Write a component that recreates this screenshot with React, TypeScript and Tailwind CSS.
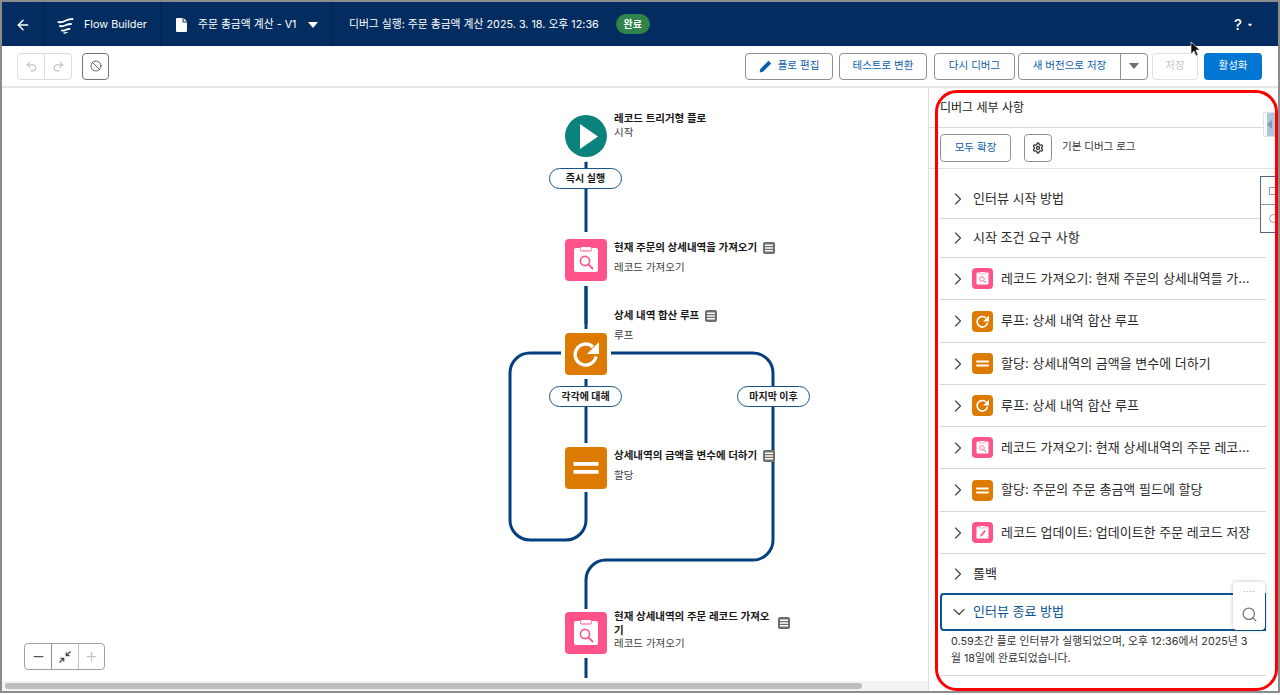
import React from "react";
import { ArrowLeft, Undo2, Redo2, Ban, ChevronRight, ChevronDown, Search, Minus, Plus, Settings } from "lucide-react";

const font = { fontFamily: 'Inter, "Noto Sans CJK KR", sans-serif' };

function Logo() {
  return (
    <svg width="17" height="17" viewBox="0 0 17 17" fill="none" stroke="#fff" strokeWidth="1.9" strokeLinecap="round">
      <path d="M1.500 5 C4 6 6 5 9 3.500 C11 2.500 13 2 15.500 2" />
      <path d="M3 9 C5 9.800 7 9 9 8 C10.500 7.300 12 7 14 7" />
      <path d="M5 13.500 C7 14 8 13.500 9.500 12.500 C10.500 12 11.500 12 12.500 12" />
      <path d="M7 16 C8 16 9 15.800 10 15.500" strokeWidth="1.300" />
    </svg>
  );
}

function Doc() {
  return (
    <svg width="11" height="14" viewBox="0 0 11 14" fill="#fff">
      <path d="M1 0h5.500v3.500a1 1 0 0 0 1 1H11V13a1 1 0 0 1-1 1H1a1 1 0 0 1-1-1V1a1 1 0 0 1 1-1z" />
      <path d="M7.500 0 11 3.500H7.500z" />
    </svg>
  );
}

function Caret({ className = "" }: { className?: string }) {
  return (
    <svg width="10" height="6" viewBox="0 0 10 6" fill="currentColor" className={className}>
      <path d="M0 0h10L5 6z" />
    </svg>
  );
}

function GetIcon({ size, r = 4 }: { size: number; r?: number }) {
  return (
    <svg width={size} height={size} viewBox="0 0 42 42">
      <rect width="42" height="42" rx={r} fill="#ff538a" />
      <path d="M11 9h4v1.500a2 2 0 0 0 2 2h8a2 2 0 0 0 2-2V9h4a2 2 0 0 1 2 2v20a2 2 0 0 1-2 2H11a2 2 0 0 1-2-2V11a2 2 0 0 1 2-2z" fill="#fff" />
      <rect x="15.500" y="8" width="11" height="3.500" rx="1.500" fill="#fff" />
      <circle cx="20" cy="22" r="4.600" fill="none" stroke="#ff538a" strokeWidth="1.600" />
      <path d="M23.400 25.400 27.500 29.500" stroke="#ff538a" strokeWidth="1.800" strokeLinecap="round" />
    </svg>
  );
}

function UpdateIcon({ size, r = 8 }: { size: number; r?: number }) {
  return (
    <svg width={size} height={size} viewBox="0 0 42 42">
      <rect width="42" height="42" rx={r} fill="#ff538a" />
      <path d="M11 9h4v1.500a2 2 0 0 0 2 2h8a2 2 0 0 0 2-2V9h4a2 2 0 0 1 2 2v20a2 2 0 0 1-2 2H11a2 2 0 0 1-2-2V11a2 2 0 0 1 2-2z" fill="#fff" />
      <rect x="15.500" y="8" width="11" height="3.500" rx="1.500" fill="#fff" />
      <path d="M25 16 17.500 25l-1.500 4.500 4-1.800 7.500-9z" fill="#ff538a" />
    </svg>
  );
}

function LoopIcon({ size, r = 4 }: { size: number; r?: number }) {
  return (
    <svg width={size} height={size} viewBox="0 0 42 42" fill="none">
      <rect width="42" height="42" rx={r} fill="#dd7a01" />
      <path d="M31 23.500a10.500 10.500 0 1 1-3-9.500" stroke="#fff" strokeWidth="3.400" />
      <path d="M34 9v12H22z" fill="#fff" />
    </svg>
  );
}

function AssignIcon({ size, r = 4 }: { size: number; r?: number }) {
  return (
    <svg width={size} height={size} viewBox="0 0 42 42">
      <rect width="42" height="42" rx={r} fill="#dd7a01" />
      <rect x="8.500" y="15" width="25" height="3.800" rx="0.500" fill="#fff" />
      <rect x="8.500" y="23" width="25" height="3.800" rx="0.500" fill="#fff" />
    </svg>
  );
}

function NoteIcon() {
  return (
    <svg width="12" height="12" viewBox="0 0 12 12">
      <rect width="12" height="12" rx="2" fill="#706e6b" />
      <rect x="2" y="2.500" width="8" height="1.500" fill="#fff" />
      <rect x="2" y="5.250" width="8" height="1.500" fill="#fff" />
      <rect x="2" y="8" width="8" height="1.500" fill="#fff" />
    </svg>
  );
}

function Btn({ children, className = "" }: { children: React.ReactNode; className?: string }) {
  return (
    <div className={"h-[27px] flex items-center justify-center rounded-[4px] border border-[#8f8f8f] bg-white text-[10.500px] text-[#0b5cab] " + className}>
      {children}
    </div>
  );
}

function Pill({ text, className }: { text: string; className: string }) {
  return (
    <div className={"absolute h-[21px] w-[73px] rounded-full border border-[#1b5488] bg-white flex items-center justify-center text-[10px] font-semibold text-[#181818] " + className}>
      {text}
    </div>
  );
}

type Row = { label: string; icon?: React.ReactNode; h: string };

const rows: Row[] = [
  { label: "인터뷰 시작 방법", h: "h-[39px]" },
  { label: "시작 조건 요구 사항", h: "h-[39px]" },
  { label: "레코드 가져오기: 현재 주문의 상세내역들 가...", icon: <GetIcon size={21} r={8} />, h: "h-[42px]" },
  { label: "루프: 상세 내역 합산 루프", icon: <LoopIcon size={21} r={8} />, h: "h-[43px]" },
  { label: "할당: 상세내역의 금액을 변수에 더하기", icon: <AssignIcon size={21} r={8} />, h: "h-[42px]" },
  { label: "루프: 상세 내역 합산 루프", icon: <LoopIcon size={21} r={8} />, h: "h-[42px]" },
  { label: "레코드 가져오기: 현재 상세내역의 주문 레코...", icon: <GetIcon size={21} r={8} />, h: "h-[42px]" },
  { label: "할당: 주문의 주문 총금액 필드에 할당", icon: <AssignIcon size={21} r={8} />, h: "h-[43px]" },
  { label: "레코드 업데이트: 업데이트한 주문 레코드 저장", icon: <UpdateIcon size={21} />, h: "h-[42px]" },
  { label: "롤백", h: "h-[40px]" },
];

function Header() {
  return (
    <div className="h-[44px] shrink-0 bg-[#032d60] flex items-center text-white text-[10.800px]">
      <div className="w-[43px] h-full flex items-center justify-center border-r border-[#0a2248] pt-[1px]">
        <ArrowLeft size={16} strokeWidth={2.2} />
      </div>
      <div className="w-[116px] h-full flex items-center pl-[12px] gap-[10px] border-r border-[#0a2248] pt-[2px]">
        <Logo />
        <span>Flow Builder</span>
      </div>
      <div className="w-[172px] h-full flex items-center pl-[15px] border-r border-[#0a2248] pt-[2px]">
        <Doc />
        <span className="ml-[11px]">주문 총금액 계산 - V1</span>
        <Caret className="ml-[11px]" />
      </div>
      <span className="ml-[16px] pt-[2px]">디버그 실행: 주문 총금액 계산 2025. 3. 18. 오후 12:36</span>
      <span className="ml-[17px] w-[34px] h-[20px] rounded-full bg-[#2e844a] flex items-center justify-center text-[10px] font-semibold">완료</span>
      <div className="ml-auto mr-[23px] flex items-center gap-[3px] pt-[2px]">
        <span className="text-[15px] font-medium">?</span>
        <Caret className="scale-50" />
      </div>
    </div>
  );
}

function Toolbar() {
  return (
    <div className="h-[42px] shrink-0 bg-white border-b-2 border-[#e5e5e5] flex items-center pl-[15px] pr-[16px] relative">
      <div className="flex h-[27px] w-[55px] rounded-[4px] border border-[#dcdcdc] text-[#c4c4c4]">
        <div className="flex-1 flex items-center justify-center border-r border-[#dcdcdc]"><Undo2 size={13} /></div>
        <div className="flex-1 flex items-center justify-center"><Redo2 size={13} /></div>
      </div>
      <div className="ml-[10px] w-[27px] h-[27px] rounded-[4px] border border-[#747474] flex items-center justify-center text-[#444]">
        <Ban size={12} strokeWidth={1.6} />
      </div>
      <div className="ml-auto flex items-center">
        <Btn className="w-[88px] gap-[6px]">
          <svg width="13" height="13" viewBox="0 0 13 13" fill="#0b5cab"><path d="M9.500.8 12.200 3.500 4 11.700.6 12.400 1.300 9z" /></svg>
          플로 편집
        </Btn>
        <Btn className="w-[88px] ml-[6px]">테스트로 변환</Btn>
        <Btn className="w-[81px] ml-[7px]">다시 디버그</Btn>
        <div className="ml-[3px] flex h-[27px] w-[130px] rounded-[4px] border border-[#8f8f8f] text-[10.500px] text-[#0b5cab]">
          <div className="flex-1 flex items-center justify-center border-r border-[#8f8f8f]">새 버전으로 저장</div>
          <div className="w-[26px] flex items-center justify-center text-[#706e6b]"><Caret /></div>
        </div>
        <div className="ml-[4px] w-[46px] h-[27px] rounded-[4px] border border-[#e0e0e0] flex items-center justify-center text-[10.500px] text-[#c4c4c4]">저장</div>
        <div className="ml-[6px] w-[58px] h-[27px] rounded-[4px] bg-[#0176d3] flex items-center justify-center text-[10.500px] text-white">활성화</div>
      </div>
    </div>
  );
}

function NodeLabel({ title, sub, className, note, gap = "mt-[6px]" }: { title: React.ReactNode; sub: string; className: string; note?: boolean; gap?: string }) {
  return (
    <div className={"absolute text-[10.500px] leading-[14px] text-[#181818] " + className}>
      <div className="font-semibold flex items-center gap-[6px] whitespace-nowrap">
        <span>{title}</span>
        {note && <NoteIcon />}
      </div>
      <div className={"text-[#3e3e3c] " + gap}>{sub}</div>
    </div>
  );
}

function Canvas() {
  return (
    <div className="relative flex-1 bg-white overflow-hidden">
      <svg className="absolute left-0 top-0" width="926" height="604" fill="none" stroke="#03407f" strokeWidth="3">
        <path d="M584 72V236" />
        <path d="M584 196V241" />
        <path d="M559 265H528a20 20 0 0 0-20 20V432a20 20 0 0 0 20 20H564a20 20 0 0 0 20-20V404" />
        <path d="M584 290V355" />
        <path d="M608 265H751a20 20 0 0 1 20 20V452a20 20 0 0 1-20 20H604a20 20 0 0 0-20 20V521" />
        <path d="M584 570V590" />
      </svg>
      <div className="absolute left-[555px] top-[20px] w-[54px] h-[54px] rounded-full bg-white" />
      <div className="absolute left-[559px] top-[144px] w-[50px] h-[54px] bg-white" />
      <div className="absolute left-[559px] top-[241px] w-[50px] h-[50px] bg-white" />
      <div className="absolute left-[559px] top-[355px] w-[50px] h-[49px] bg-white" />
      <div className="absolute left-[559px] top-[521px] w-[50px] h-[49px] bg-white" />

      <svg className="absolute left-[563px] top-[27px]" width="42" height="42" viewBox="0 0 42 42">
        <circle cx="21" cy="21" r="21" fill="#0b827c" />
        <path d="M15 9v25l18-12.500z" fill="#fff" />
      </svg>
      <div className="absolute left-[563px] top-[151px]"><GetIcon size={42} /></div>
      <div className="absolute left-[563px] top-[245px]"><LoopIcon size={42} /></div>
      <div className="absolute left-[563px] top-[359px]"><AssignIcon size={42} /></div>
      <div className="absolute left-[563px] top-[524px]"><GetIcon size={42} /></div>

      <Pill text="즉시 실행" className="left-[547px] top-[80px]" />
      <Pill text="각각에 대해" className="left-[547px] top-[298px]" />
      <Pill text="마지막 이후" className="left-[735px] top-[298px]" />

      <NodeLabel className="left-[612px] top-[24px]" title="레코드 트리거형 플로" sub="시작" gap="mt-0" />
      <NodeLabel className="left-[612px] top-[153px]" title="현재 주문의 상세내역을 가져오기" sub="레코드 가져오기" note />
      <NodeLabel className="left-[612px] top-[221px]" title="상세 내역 합산 루프" sub="루프" note />
      <NodeLabel className="left-[612px] top-[361px]" title="상세내역의 금액을 변수에 더하기" sub="할당" note />
      <div className="absolute left-[612px] top-[522px] w-[160px] text-[10.500px] leading-[14px] text-[#181818] font-semibold">
        현재 상세내역의 주문 레코드 가져오기
      </div>
      <div className="absolute left-[776px] top-[529px]"><NoteIcon /></div>
      <div className="absolute left-[612px] top-[549px] text-[10.500px] leading-[14px] text-[#3e3e3c]">레코드 가져오기</div>

      <div className="absolute left-[22px] top-[555px] flex h-[27px] w-[81px] rounded-[4px] border border-[#a0a0a0]">
        <div className="w-[27px] flex items-center justify-center border-r border-[#8f8f8f] text-[#555]"><Minus size={15} /></div>
        <div className="w-[27px] flex items-center justify-center border-r border-[#c4c4c4] text-[#444]">
          <svg width="14" height="14" viewBox="0 0 14 14" fill="none" stroke="currentColor" strokeWidth="1.300">
            <path d="M12.500 1.500 8.500 5.500M8.300 2.500v3.200h3.200M1.500 12.500l4-4M5.700 11.500V8.300H2.500" />
          </svg>
        </div>
        <div className="flex-1 flex items-center justify-center text-[#c4c4c4]"><Plus size={15} /></div>
      </div>

      <div className="absolute left-0 bottom-0 right-0 h-[10px] bg-[#f3f3f3]">
        <div className="ml-[3px] mt-[2px] h-[6px] w-[857px] rounded-full bg-[#bdbdbd]" />
      </div>
    </div>
  );
}

function Panel() {
  return (
    <div className="w-[350px] shrink-0 bg-white border-l border-[#dedede] flex flex-col overflow-hidden text-[#181818]">
      <div className="h-[40px] shrink-0 border-b border-[#d8d8d8] flex items-center pl-[11px] pt-[1px] text-[12px]">디버그 세부 사항</div>
      <div className="h-[41px] shrink-0 border-b border-[#e0e0e0] flex items-center pl-[11px]">
        <div className="w-[71px] h-[28px] rounded-[4px] border border-[#8f8f8f] flex items-center justify-center text-[10.500px] text-[#0b5cab]">모두 확장</div>
        <div className="ml-[13px] w-[28px] h-[28px] rounded-[4px] border border-[#8f8f8f] flex items-center justify-center text-[#333]"><Settings size={12} strokeWidth={2.6} /></div>
        <div className="ml-[10px] mb-[3px] text-[10.500px] text-[#333]">기본 디버그 로그</div>
      </div>
      <div className="pl-[11px] pr-[12px] pt-[11px] flex flex-col">
        {rows.map((r, i) => (
          <div key={i} className={"shrink-0 flex items-center border-b border-[#d6d6d6] text-[13px] text-[#2b2b2b] " + r.h}>
            <ChevronRight size={20} strokeWidth={1.4} className="ml-[8px] text-[#444] shrink-0" />
            <div className={(r.icon ? "ml-[4px]" : "ml-[5px]") + " flex items-center gap-[8px] whitespace-nowrap"}>
              {r.icon}
              <span>{r.label}</span>
            </div>
          </div>
        ))}
        <div className="shrink-0 h-[38px] mt-[-1px] rounded-l-[4px] border-2 border-[#0b5394] flex items-center text-[13px] text-[#0b5394]">
          <ChevronDown size={20} strokeWidth={1.4} className="ml-[7px] text-[#444]" />
          <span className="ml-[4px]">인터뷰 종료 방법</span>
        </div>
        <div className="h-[45px] border-b border-[#d6d6d6] pl-[11px] pt-[3px] text-[10.800px] leading-[16.500px] text-[#333]">
          <div className="w-[300px]">0.59초간 플로 인터뷰가 실행되었으며, 오후 12:36에서 2025년 3월 18일에 완료되었습니다.</div>
        </div>
      </div>
    </div>
  );
}

export default function App() {
  return (
    <div style={font} className="relative w-[1280px] h-[695px] overflow-hidden bg-white">
      <div className="w-[1280px] h-[693px] border-2 border-[#8c8c8c] flex flex-col overflow-hidden">
        <Header />
        <Toolbar />
        <div className="flex-1 flex min-h-0">
          <Canvas />
          <Panel />
        </div>
      </div>
      <div className="absolute left-[1263px] top-[112px] w-[15px] h-[25px] rounded-l-[2px] border border-[#e0e0e0] bg-white flex items-center justify-end">
        <div className="w-[10px] h-full bg-[#a9c8dc] flex items-center justify-start">
          <svg width="5" height="9" viewBox="0 0 5 9" fill="#7c9ab0"><path d="M5 0v9L0 4.500z" /></svg>
        </div>
      </div>
      <div className="absolute left-[1260px] top-[176px] w-[18px] h-[57px] border border-r-0 border-[#51678a] bg-white flex flex-col">
        <div className="flex-1 border-b border-[#8a97ab] flex items-center pl-[8px]"><div className="w-[9px] h-[8px] border border-[#999]" /></div>
        <div className="flex-1 flex items-center pl-[8px]"><div className="w-[9px] h-[9px] rounded-full border border-[#999]" /></div>
      </div>
      <div className="absolute left-[1233px] top-[582px] w-[32px] h-[48px] rounded-[4px] bg-white shadow-[0_0_4px_rgba(0,0,0,0.25)] flex flex-col items-center pt-[5px]">
        <div className="text-[9px] leading-[9px] tracking-[0.5px] text-[#aaa]">····</div>
        <Search size={17} strokeWidth={1.8} className="mt-[10px] text-[#777]" />
      </div>
      <svg className="absolute left-[1190px] top-[41px]" width="10" height="16" viewBox="0 0 10 16"><path d="M1 1v12l3-3 2 5 2-1-2-5h4z" fill="#111" stroke="#fff" strokeWidth="0.600" /></svg>
      <div className="absolute left-[935px] top-[90px] w-[343px] h-[601px] rounded-[22px] border-[3px] border-[#ff0000] pointer-events-none" />
    </div>
  );
}
